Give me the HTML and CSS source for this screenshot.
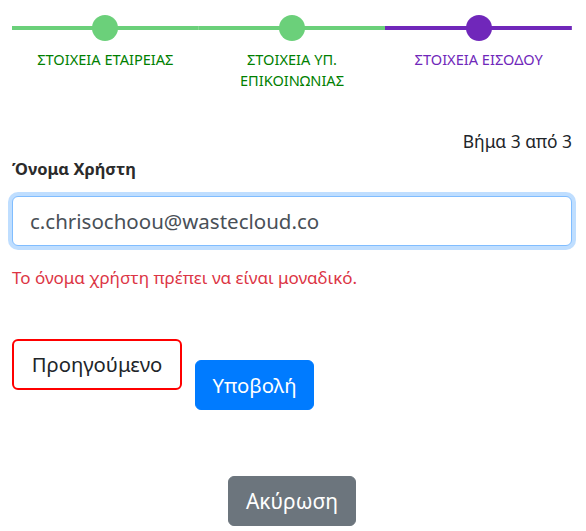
FILE: index.html
```html
<!DOCTYPE html>
<html lang="el">
<head>
<meta charset="utf-8">
<title>Εγγραφή</title>
<link rel="stylesheet" href="styles.css">
</head>
<body>
<div class="page">
  <div class="stepper">
    <div class="step done">
      <div class="track"><span class="dot"></span></div>
      <div class="label">ΣΤΟΙΧΕΙΑ ΕΤΑΙΡΕΙΑΣ</div>
    </div>
    <div class="step done">
      <div class="track"><span class="dot"></span></div>
      <div class="label">ΣΤΟΙΧΕΙΑ ΥΠ.<br>ΕΠΙΚΟΙΝΩΝΙΑΣ</div>
    </div>
    <div class="step active">
      <div class="track"><span class="dot"></span></div>
      <div class="label">ΣΤΟΙΧΕΙΑ ΕΙΣΟΔΟΥ</div>
    </div>
  </div>

  <div class="step-count">Βήμα 3 από 3</div>
  <label class="field-label" for="username">Όνομα Χρήστη</label>
  <input id="username" class="field-input" type="text" value="c.chrisochoou@wastecloud.co">
  <div class="field-error">Το όνομα χρήστη πρέπει να είναι μοναδικό.</div>

  <div class="actions">
    <button class="btn btn-prev" type="button">Προηγούμενο</button>
    <button class="btn btn-submit" type="submit">Υποβολή</button>
  </div>
  <div class="cancel-row">
    <button class="btn btn-cancel" type="button">Ακύρωση</button>
  </div>
</div>
</body>
</html>
```
FILE: styles.css
```css
* { box-sizing: border-box; }
html, body { margin: 0; background: #fff; }
body {
  font-family: "Noto Sans", "Open Sans", sans-serif;
  color: #212529;
  width: 586px;
  height: 531px;
  overflow: hidden;
}
.page { padding: 0 14px 0 12px; }

.stepper {
  display: grid;
  grid-template-columns: repeat(3, 1fr);
  padding-top: 15px;
}
.step { display: flex; flex-direction: column; align-items: center; }
.track {
  width: 100%;
  height: 26px;
  display: flex;
  justify-content: center;
  background: linear-gradient(#6bd07a, #6bd07a) center / 100% 4px no-repeat;
}
.dot { width: 26px; height: 26px; border-radius: 50%; background: #6bd07a; }
.step.active .track { background-image: linear-gradient(#7027ba, #7027ba); }
.step.active .dot { background: #7027ba; }
.label {
  margin-top: 8px;
  font-size: 14.6px;
  line-height: 21px;
  text-align: center;
  color: #008000;
}
.step.active .label { color: #7027ba; }

.step-count {
  margin-top: 38px;
  text-align: right;
  font-size: 17.4px;
  line-height: 24px;
}
.field-label {
  display: block;
  margin-top: 4px;
  font-size: 16.5px;
  font-weight: 700;
  line-height: 24px;
  color: #2b2b2b;
}
.field-input {
  display: block;
  width: 100%;
  height: 50px;
  margin-top: 15px;
  padding: 0 15px 0 17px;
  font-family: inherit;
  font-size: 20.5px;
  color: #495057;
  border: 1px solid #80bdff;
  border-radius: 6px;
  box-shadow: 0 0 0 4px rgba(0, 123, 255, .25);
  outline: none;
}
.field-error {
  margin-top: 20px;
  font-size: 17px;
  line-height: 24px;
  color: #dc3545;
}

.btn {
  font-family: "Noto Sans", "Open Sans", sans-serif;
  font-size: 20.3px;
  line-height: 27px;
  border-radius: 6px;
  cursor: pointer;
}
.actions {
  display: flex;
  align-items: flex-start;
  gap: 13px;
  margin-top: 49px;
}
.btn-prev {
  width: 170px;
  height: 51px;
  background: #fff;
  color: #212529;
  border: 2px solid #ff0000;
}
.btn-submit {
  width: 119px;
  height: 50px;
  margin-top: 21px;
  background: #007bff;
  color: #fff;
  border: 1px solid #007bff;
}
.cancel-row {
  display: flex;
  justify-content: center;
  margin-top: 66px;
}
.btn-cancel {
  width: 128px;
  height: 50px;
  font-size: 21px;
  background: #6c757d;
  color: #fff;
  border: 1px solid #6c757d;
}
```
